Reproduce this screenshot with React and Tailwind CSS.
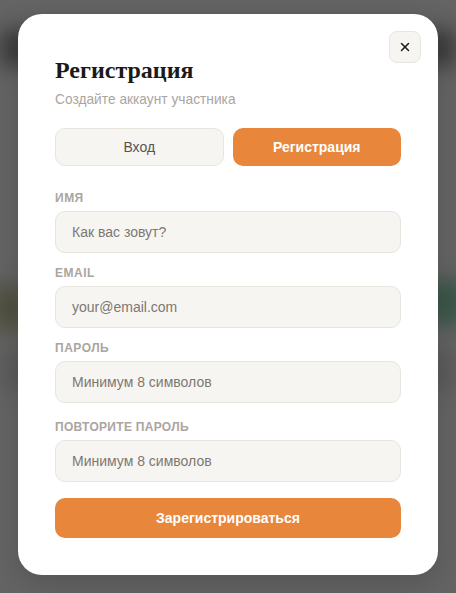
import React, { useState } from 'react';
import { X } from 'lucide-react';

const Field = ({ label, type = 'text', placeholder, className = '', labelClass = 'tracking-[0.5px]' }) => (
  <div className={`flex flex-col ${className}`}>
    <label className={`mb-1.5 text-[12px] font-bold uppercase leading-[14px] text-[#aba59f] ${labelClass}`}>
      {label}
    </label>
    <input
      type={type}
      placeholder={placeholder}
      className="h-[42px] w-full rounded-[10px] border border-[#e8e5df] bg-[#f7f5f1] px-4 text-[14px] text-[#3a3632] placeholder:text-[#7c7873] outline-none"
    />
  </div>
);

const App = () => {
  const [tab, setTab] = useState('register');

  return (
    <div className="relative h-[593px] w-[456px] overflow-hidden bg-[#646464] font-['Liberation_Sans',Arial,sans-serif]">
      {/* Blurred page behind the overlay */}
      <div className="absolute inset-0 blur-[10px]">
        <div className="absolute left-0 right-0 top-[30px] h-[36px] bg-[#3a3a3a]" />
        <div className="absolute left-[-10px] top-[285px] h-[45px] w-[40px] bg-[#505040]" />
        <div className="absolute right-[-10px] top-[280px] h-[45px] w-[40px] bg-[#3a5548]" />
        <div className="absolute left-0 right-0 top-[350px] h-[40px] bg-[#5a5a5a]" />
      </div>

      {/* Modal */}
      <div className="relative ml-[18px] mt-[14px] w-[420px] rounded-[24px] bg-white px-[37px] pt-[40px] pb-[37px] shadow-[0_10px_30px_rgba(0,0,0,0.15)]">
        <button className="absolute right-[17px] top-[17px] flex h-8 w-8 items-center justify-center rounded-lg border border-[#e8e5df] bg-[#f7f5f1] text-[#1c1917]">
          <X size={14} strokeWidth={2.5} />
        </button>

        <h2 className="font-['Liberation_Serif','Times_New_Roman',serif] text-[24px] font-bold leading-[32px] text-[#1c1917]">
          Регистрация
        </h2>
        <p className="mt-[5px] text-[13.75px] leading-[18px] text-[#aba59f]">Создайте аккаунт участника</p>

        <div className="mt-[19px] grid grid-cols-2 gap-[9px]">
          <button
            onClick={() => setTab('login')}
            className={`h-[38px] rounded-[10px] text-[14px] ${tab === 'login' ? 'bg-[#e8863b] font-bold text-white' : 'border border-[#e8e5df] bg-[#f7f5f1] text-[#57534e]'}`}
          >
            Вход
          </button>
          <button
            onClick={() => setTab('register')}
            className={`h-[38px] rounded-[10px] text-[14px] ${tab === 'register' ? 'bg-[#e8863b] font-bold text-white' : 'border border-[#e8e5df] bg-[#f7f5f1] text-[#57534e]'}`}
          >
            Регистрация
          </button>
        </div>

        <div className="mt-[25px] flex flex-col">
          <Field label="Имя" placeholder="Как вас зовут?" />
          <Field label="Email" type="email" placeholder="your@email.com" className="mt-[13px]" />
          <Field label="Пароль" type="password" placeholder="Минимум 8 символов" className="mt-[13px]" />
          <Field
            label="Повторите пароль"
            type="password"
            placeholder="Минимум 8 символов"
            className="mt-[17px]"
            labelClass="tracking-[0.3px]"
          />
        </div>

        <button className="mt-[16px] h-[40px] w-full rounded-[10px] bg-[#e8863b] text-[14px] font-bold text-white">
          Зарегистрироваться
        </button>
      </div>
    </div>
  );
};

export default App;
